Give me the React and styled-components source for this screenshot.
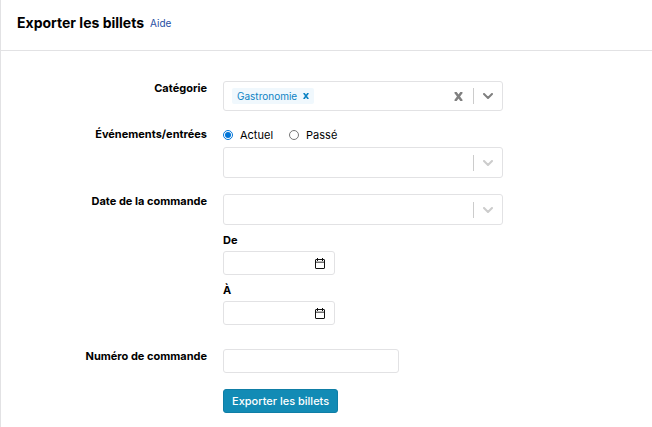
import React, { useState } from "react";
import styled, { createGlobalStyle } from "styled-components";

const GlobalStyle = createGlobalStyle`
  *, *::before, *::after { box-sizing: border-box; }
  body {
    margin: 0;
    background: #fff;
    color: #000;
    font: 400 11px/14px Inter, "Liberation Sans", sans-serif;
  }
  button, input, select { font: inherit; color: inherit; }
`;

const Page = styled.main`
  min-height: 100vh;
  border-left: 1px solid #e2e2e4;
`;

const Header = styled.header`
  display: flex;
  align-items: center;
  gap: 6px;
  padding: 12px 16px 16px;
  border-bottom: 1px solid #e2e2e4;
`;

const Title = styled.h1`
  margin: 0;
  font-size: 14px;
  line-height: 22px;
  font-weight: 700;
`;

const HelpLink = styled.a`
  font-size: 10px;
  color: #1f4fa3;
  text-decoration: none;
`;

const Form = styled.form`
  display: flex;
  flex-direction: column;
  gap: 16px;
  padding: 30px 16px 14px 0;
`;

const Row = styled.div`
  display: grid;
  grid-template-columns: 206px minmax(0, 280px);
  column-gap: 16px;
  align-items: start;
  margin-top: ${(p) => (p.$spaced ? "8px" : "0")};
`;

const RowLabel = styled.label`
  font-weight: 700;
  text-align: right;
`;

const Control = styled.div`
  grid-column: 2;
  min-width: 0;
`;

const SelectFrame = styled.div`
  display: flex;
  align-items: center;
  height: ${(p) => (p.$filled ? "30px" : "31px")};
  border: 1px solid #e2e2e4;
  border-radius: 3px;
  background: #fff;
  color: ${(p) => (p.$filled ? "#808080" : "#ccc")};
`;

const NativeSelect = styled.select`
  flex: 1;
  min-width: 0;
  height: 100%;
  padding: 0 8px;
  border: 0;
  background: transparent;
  appearance: none;
  color: #000;
`;

const ComboInput = styled.input`
  flex: 1;
  min-width: 0;
  padding: 0 4px;
  border: 0;
  outline: 0;
  background: transparent;
  color: #000;
`;

const Tag = styled.span`
  display: flex;
  align-items: center;
  height: 16px;
  margin-left: 8px;
  padding-left: 5px;
  border-radius: 2px;
  background: #f0f8fd;
  color: #0c83c4;
  font-size: 10px;
`;

const IconButton = styled.button`
  display: flex;
  align-items: center;
  justify-content: center;
  flex: none;
  width: ${(p) => p.$width};
  height: 16px;
  padding: 0;
  border: 0;
  background: transparent;
  color: inherit;
  cursor: pointer;
`;

const Divider = styled.span`
  flex: none;
  width: 1px;
  height: 16px;
  background: #ccc;
`;

const Indicator = styled.span`
  display: flex;
  justify-content: center;
  flex: none;
  width: 28px;
  pointer-events: none;
`;

const RadioGroup = styled.div`
  display: flex;
  gap: 16px;
  height: 16px;
  margin-bottom: 4px;
`;

const RadioLabel = styled.label`
  display: flex;
  align-items: center;
  gap: 7px;
`;

const Radio = styled.input`
  flex: none;
  width: 10px;
  height: 10px;
  margin: 0;
  accent-color: #0075d8;
`;

const DateStack = styled.div`
  display: flex;
  flex-direction: column;
  align-items: flex-start;
  gap: 8px;
  margin-top: 8px;
`;

const DateGroup = styled.div`
  display: flex;
  flex-direction: column;
  gap: 4px;
`;

const DateLabel = styled.label`
  font-weight: 700;
`;

const DateFrame = styled.div`
  display: flex;
  align-items: center;
  width: 112px;
  height: 24px;
  padding-right: 6px;
  border: 1px solid #e2e2e4;
  border-radius: 3px;
  color: #111;
`;

const TextField = styled.input`
  display: block;
  width: 176px;
  max-width: 100%;
  height: 24px;
  padding: 0 8px;
  border: 1px solid #e2e2e4;
  border-radius: 3px;
  background: #fff;
`;

const SubmitButton = styled.button`
  height: 24px;
  padding: 0 8px;
  border: 1px solid #0f7ea6;
  border-radius: 3px;
  background: #128bb5;
  color: #fff;
  font-weight: 500;
  cursor: pointer;
`;

const Chevron = () => (
  <svg width="10" height="6" viewBox="0 0 10 6" fill="none" stroke="currentColor" strokeWidth="2" strokeLinecap="round" strokeLinejoin="round" aria-hidden="true">
    <path d="M1 1l4 4 4-4" />
  </svg>
);

const Cross = ({ size }) => (
  <svg width={size} height={size} viewBox="0 0 8 8" fill="none" stroke="currentColor" strokeWidth="2.2" aria-hidden="true">
    <path d="M1 0l6 8M7 0l-6 8" />
  </svg>
);

const Calendar = () => (
  <svg width="10" height="11" viewBox="0 0 10 11" fill="none" stroke="currentColor" aria-hidden="true">
    <rect x="0.5" y="1.5" width="9" height="9" rx="0.5" />
    <path d="M2.5 0v3M7.5 0v3" />
    <path d="M1 3.5h8" strokeOpacity="0.3" />
    <path d="M1 4.5h8" strokeOpacity="0.6" />
  </svg>
);

const EmptySelect = ({ id }) => (
  <SelectFrame>
    <NativeSelect id={id}>
      <option value="" />
    </NativeSelect>
    <Divider />
    <Indicator><Chevron /></Indicator>
  </SelectFrame>
);

const DateField = ({ id, label }) => (
  <DateGroup>
    <DateLabel htmlFor={id}>{label}</DateLabel>
    <DateFrame>
      <ComboInput id={id} type="text" />
      <IconButton type="button" $width="16px" aria-label="Ouvrir le calendrier">
        <Calendar />
      </IconButton>
    </DateFrame>
  </DateGroup>
);

export default function App() {
  const [tags, setTags] = useState(["Gastronomie"]);
  const [period, setPeriod] = useState("Actuel");

  return (
    <>
      <GlobalStyle />
      <Page>
        <Header>
          <Title>Exporter les billets</Title>
          <HelpLink href="#aide">Aide</HelpLink>
        </Header>
        <Form onSubmit={(e) => e.preventDefault()}>
          <Row>
            <RowLabel htmlFor="category">Catégorie</RowLabel>
            <Control>
              <SelectFrame $filled>
                {tags.map((tag) => (
                  <Tag key={tag}>
                    {tag}
                    <IconButton
                      type="button"
                      $width="17px"
                      aria-label={`Retirer ${tag}`}
                      onClick={() => setTags(tags.filter((t) => t !== tag))}
                    >
                      <Cross size={6} />
                    </IconButton>
                  </Tag>
                ))}
                <ComboInput id="category" role="combobox" aria-expanded="false" />
                <IconButton type="button" $width="30px" aria-label="Tout effacer" onClick={() => setTags([])}>
                  <Cross size={9} />
                </IconButton>
                <Divider />
                <IconButton type="button" $width="28px" aria-label="Ouvrir la liste">
                  <Chevron />
                </IconButton>
              </SelectFrame>
            </Control>
          </Row>
          <Row>
            <RowLabel htmlFor="events">Événements/entrées</RowLabel>
            <Control>
              <RadioGroup role="radiogroup" aria-label="Période">
                {["Actuel", "Passé"].map((option) => (
                  <RadioLabel key={option}>
                    <Radio
                      type="radio"
                      name="period"
                      checked={period === option}
                      onChange={() => setPeriod(option)}
                    />
                    {option}
                  </RadioLabel>
                ))}
              </RadioGroup>
              <EmptySelect id="events" />
            </Control>
          </Row>
          <Row>
            <RowLabel htmlFor="order-date">Date de la commande</RowLabel>
            <Control>
              <EmptySelect id="order-date" />
              <DateStack>
                <DateField id="date-from" label="De" />
                <DateField id="date-to" label="À" />
              </DateStack>
            </Control>
          </Row>
          <Row $spaced>
            <RowLabel htmlFor="order-number">Numéro de commande</RowLabel>
            <Control>
              <TextField id="order-number" type="text" />
            </Control>
          </Row>
          <Row>
            <Control>
              <SubmitButton type="submit">Exporter les billets</SubmitButton>
            </Control>
          </Row>
        </Form>
      </Page>
    </>
  );
}
